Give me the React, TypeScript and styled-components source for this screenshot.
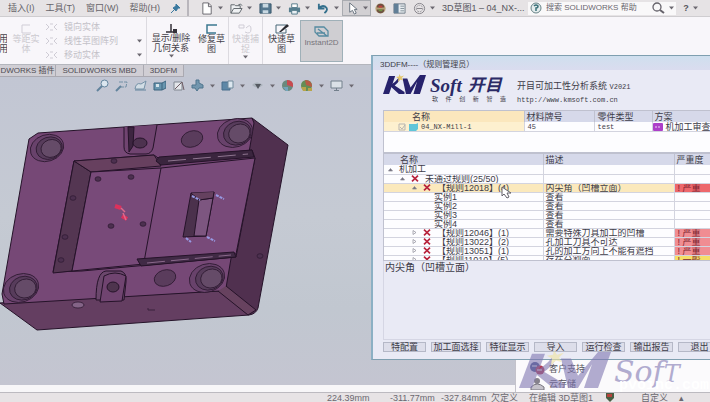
import React from "react";
import styled, { createGlobalStyle, css } from "styled-components";

const Global = createGlobalStyle`
  * { box-sizing: border-box; }
  body { margin: 0; overflow: hidden; }
  body, button, input { font-family: "Liberation Sans", "Noto Sans CJK SC", sans-serif; }
  button { margin: 0; padding: 0; border: 0; background: none; color: inherit; font-size: inherit; line-height: inherit; white-space: nowrap; }
  svg { display: block; flex: none; }
`;

const Page = styled.div`
  position: relative;
  display: flex;
  flex-direction: column;
  min-height: 100vh;
  overflow: hidden;
  font-size: 9px;
  line-height: 12px;
  color: #55545c;
  background: #c3c7d2;
`;

/* ---------- title bar ---------- */
const TitleBar = styled.header`
  display: flex;
  align-items: center;
  height: 17px;
  background: #e6e3e5;
  border-bottom: 1px solid #cfcdd0;
  white-space: nowrap;
`;
const Menus = styled.nav`
  display: flex;
  align-items: center;
  gap: 11px;
  width: 189px;
  height: 100%;
  padding-left: 8px;
  flex: none;
  border-right: 2px solid #b9b6bc;
  color: #66636a;
`;
const ToolButton = styled.button<{ $pressed?: boolean; $wide?: boolean }>`
  display: flex;
  align-items: center;
  justify-content: center;
  gap: 4px;
  width: ${(p) => (p.$wide ? 29 : 19)}px;
  height: 16px;
  flex: none;
  ${(p) =>
    p.$pressed &&
    css`
      background: #d2d0d3;
      border: 1px solid #a9abb0;
    `}
`;
const Tools = styled.div`
  display: flex;
  padding-left: 8px;
  flex: none;
`;
const DocTitle = styled.span`
  margin-left: 4px;
  width: 86px;
  flex: none;
`;
const SearchBox = styled.label`
  display: flex;
  align-items: center;
  gap: 4px;
  width: 148px;
  height: 13px;
  flex: none;
  padding: 0 2px;
  background: #f9f8f9;
`;
const SearchInput = styled.input`
  flex: 1;
  min-width: 0;
  padding: 0;
  border: 0;
  outline: 0;
  background: none;
  font-size: 8px;
  line-height: 12px;
  color: #55545c;
  &::placeholder { color: #69666e; opacity: 1; }
`;

/* ---------- ribbon ---------- */
const Ribbon = styled.section`
  display: flex;
  height: 47px;
  background: #f8f6fa;
`;
const Group = styled.div<{ $width: number }>`
  display: flex;
  width: ${(p) => p.$width}px;
  flex: none;
  border-right: 1px solid #dcdae0;
`;
const RibbonButton = styled.button<{ $width: number; $muted?: boolean; $active?: boolean }>`
  display: flex;
  flex-direction: column;
  align-items: center;
  gap: 1px;
  width: ${(p) => p.$width}px;
  flex: none;
  padding-top: 7px;
  line-height: 9px;
  overflow: hidden;
  color: ${(p) => (p.$muted ? "#cbc9cf" : "#454249")};
  ${(p) =>
    p.$active &&
    css`
      margin: 3px 0 2px;
      padding-top: 5px;
      background: #cfced2;
      border: 1px solid #9fb0b8;
      color: #77757b;
      font-size: 8px;
    `}
`;
const MiniList = styled.div`
  display: flex;
  flex-direction: column;
  flex: 1;
  padding: 3px 4px 0 0;
`;
const MiniRow = styled.button`
  display: flex;
  align-items: center;
  gap: 6px;
  height: 14px;
  color: #c3c1c8;
  & > :last-child { margin-left: auto; }
`;

/* ---------- tabs, view tools and the model ---------- */
const Tabs = styled.nav`
  display: flex;
  height: 13px;
  flex: none;
  border-top: 1px solid #b4b6bd;
`;
const Tab = styled.button<{ $width: number }>`
  width: ${(p) => p.$width}px;
  overflow: hidden;
  background: #d0ced4;
  border-right: 1px solid #aaa9b1;
  border-bottom: 1px solid #aaa9b1;
  font-size: 8px;
  line-height: 11px;
  color: #4e4b53;
`;
const Workspace = styled.main`
  flex: 1;
  background: linear-gradient(#c2c6d3, #c5cad3 45%, #c1c7d0 75%, #c4c5d1);
`;
const ViewTools = styled.div`
  display: flex;
  align-items: center;
  gap: 6px;
  height: 17px;
  padding-left: 96px;
`;
const ModelDrawing = styled.svg`
  width: 300px;
  height: 240px;
  margin-top: 6px;
`;
const Strip = styled.div`
  height: 7px;
  background: #f7f6f8;
`;
const StatusBar = styled.footer`
  display: flex;
  height: 10px;
  flex: none;
  padding-left: 327px;
  border-top: 1px solid #bcbac0;
  background: #e7e3e5;
  line-height: 10px;
  white-space: nowrap;
  color: #6b6870;
`;
const Status = styled.span<{ $width: number }>`
  width: ${(p) => p.$width}px;
  flex: none;
`;

/* ---------- dialog ---------- */
const Dialog = styled.section`
  position: absolute;
  left: 371px;
  top: 55px;
  bottom: 42px;
  width: 400px;
  display: flex;
  flex-direction: column;
  padding: 0 10px 7px 10px;
  background: #e9eaf5;
  border: 1px solid #7f9fb0;
  border-left: 2px solid #8bb0c4;
  color: #3d3c48;
`;
const DialogTitle = styled.h2`
  margin: 0 -10px;
  padding-left: 7px;
  height: 14px;
  background: linear-gradient(#cfdfee, #dadcef);
  font-size: 8px;
  line-height: 17px;
  font-weight: 400;
`;
const Brand = styled.div`
  display: flex;
  height: 40px;
  padding-top: 4px;
`;
const BrandText = styled.div`
  width: 91px;
  padding-left: 4px;
  flex: none;
`;
const BrandName = styled.div`
  display: flex;
  gap: 6px;
  height: 20px;
  font: italic bold 19px/24px "Liberation Serif", "Noto Sans CJK SC", serif;
  color: #2b2a66;
`;
const BrandCjk = styled.span`
  font-size: 17px;
`;
const BrandSlogan = styled.div`
  display: flex;
  justify-content: space-between;
  width: 76px;
  font-size: 6px;
  line-height: 10px;
  padding-left: 2px;
`;
const ProductInfo = styled.div`
  padding-top: 6px;
  font-size: 9px;
  line-height: 12px;
  white-space: nowrap;
`;
const Mono = styled.span`
  font-family: "Liberation Mono", monospace;
  font-size: 7px;
`;
const TableBox = styled.div<{ $height: number }>`
  height: ${(p) => p.$height}px;
  flex: none;
  overflow: hidden;
  background: #fdfdff;
  border: 1px solid #bfc1cf;
`;
const Table = styled.table`
  width: 100%;
  table-layout: fixed;
  border-collapse: collapse;
  white-space: nowrap;
`;
const Th = styled.th<{ $width?: number; $hot?: boolean; $indent: number }>`
  width: ${(p) => (p.$width ? `${p.$width}px` : "auto")};
  height: 11px;
  padding: 0 0 0 ${(p) => p.$indent}px;
  background: ${(p) => (p.$hot ? "#fbe7bd" : "#d6d9ea")};
  border-right: 1px solid #bfc1cf;
  text-align: left;
  font-weight: 400;
  font-size: 9px;
  line-height: 10px;
`;
const Td = styled.td<{ $tone?: string; $indent?: number; $alert?: boolean }>`
  height: 9px;
  padding: 0 0 0 ${(p) => p.$indent ?? 3}px;
  overflow: hidden;
  background: ${(p) => p.$tone ?? "transparent"};
  border-right: 1px solid #d3d4df;
  border-bottom: 1px solid #d3d4df;
  font-size: 9px;
  line-height: 8px;
  color: ${(p) => (p.$alert ? "#7c1f30" : "inherit")};
`;
const Line = styled.span<{ $depth?: number }>`
  display: flex;
  align-items: center;
  gap: ${(p) => (p.$depth === undefined ? 3 : 6)}px;
  height: 8px;
  padding-left: ${(p) => (p.$depth ?? 0) * 13}px;
`;
const Detail = styled.p`
  flex: 1;
  margin: 0 0 2px;
  padding: 0 1px;
  border: 1px solid #d5d6e4;
  border-top: 0;
  font-size: 10px;
  line-height: 13px;
`;
const Actions = styled.div`
  display: flex;
  gap: 5px;
  height: 10px;
  flex: none;
`;
const Action = styled.button<{ $wide?: boolean }>`
  width: ${(p) => (p.$wide ? 50 : 43)}px;
  flex: none;
  background: #dddeea;
  border: 1px solid #b5b8c7;
  font-size: 9px;
  line-height: 8px;
`;

/* ---------- overlays ---------- */
const Popup = styled.div`
  position: absolute;
  left: 515px;
  right: 0;
  bottom: 10px;
  height: 32px;
  display: flex;
  flex-direction: column;
  padding: 1px 14px;
  background: #fbfafc;
  border-left: 1px solid #c4c3cb;
`;
const PopupRow = styled.button`
  display: flex;
  align-items: center;
  gap: 4px;
  height: 15px;
`;
const Watermark = styled.div`
  position: absolute;
  left: 519px;
  bottom: 14px;
  display: flex;
  align-items: flex-end;
  gap: 3px;
  opacity: 0.6;
  pointer-events: none;
  font: italic 30px/28px "DejaVu Serif", serif;
  color: #8077b2;
`;
const SmallCap = styled.span`
  font-size: 24px;
  text-transform: uppercase;
`;
const SiteMark = styled.div`
  position: absolute;
  left: 619px;
  bottom: 7px;
  font: bold 15px/18px "Liberation Mono", monospace;
  color: #fff;
  pointer-events: none;
`;
const Pointer = styled.svg`
  position: absolute;
  left: 501px;
  top: 186px;
`;

const Caret = () => (
  <svg width="5" height="4" viewBox="0 0 5 4"><path d="M0 .5h5L2.500 3.500z" fill="#6c6971" /></svg>
);
const Cross = () => (
  <svg width="8" height="7" viewBox="0 0 8 7"><path d="M1 .7 7 6.300M7 .7 1 6.300" stroke="#b8233c" strokeWidth="1.700" /></svg>
);
const Twist = ({ open }: { open?: boolean }) => (
  <svg width="5" height="5" viewBox="0 0 5 5">
    <path d={open ? "M.5 4 2.500 1.500 4.500 4z" : "M1 .5 4 2.500 1 4.500z"} fill={open ? "#6d6c78" : "none"} stroke="#8b8a96" strokeWidth=".7" />
  </svg>
);

const KmMark = ({ width, height, color, star }: { width: number; height: number; color: string; star: string }) => (
  <svg width={width} height={height} viewBox="0 0 92 40" preserveAspectRatio="none">
    <path d="M13 4h13L13 40H0z" fill={color} />
    <path d="M14 23Q26 18 33 8l4 2Q31 19 25 23L46 36v4H34Z" fill={color} />
    <path d="M42 9h10l7 18L79 2h13L79 40H65l8-25L59 40H49Z" fill={color} />
    <path d="M35 0l3 5 7-2-5 5 3 5-6-2-5 5 1-7-5-3 6-1z" fill={star} />
  </svg>
);

const toolIcons: { name: string; pressed?: boolean; wide: boolean; art: React.ReactNode }[] = [
  { name: "新建", wide: true, art: <path d="M2 1h6l3 3v9H2zM8 1v4h3" fill="#fff" stroke="#66646c" /> },
  { name: "打开", wide: true, art: <path d="M1 12V3h4l1 1h5v3M1 12l3-5h9l-3 5zM9 3q3-2 4 1" fill="#eef0f2" stroke="#5c6268" /> },
  { name: "保存", wide: true, art: <><path d="M1 2h12v10H1z" fill="#54778f" stroke="#38566c" /><path d="M4 2h6v4H4zM4 9h6v3H4z" fill="#c8d8e2" /></> },
  { name: "打印", wide: true, art: <><path d="M4 2h6v4H4z" fill="#fff" stroke="#517887" /><path d="M1 6h12v5H1z" fill="#567e8f" /><path d="M4 9h6v4H4z" fill="#e8eff3" stroke="#517887" /></> },
  { name: "撤销", wide: true, art: <path d="M2 2v5h6M2 7q3-4 7-2 4 3-1 7" fill="none" stroke="#34708d" strokeWidth="2" /> },
  { name: "选择", wide: true, pressed: true, art: <path d="M4 1v10l3-2 2 4 2-1-2-4h3z" fill="#fff" stroke="#66707c" /> },
  { name: "重建", wide: false, art: <><circle cx="7" cy="7" r="5.500" fill="#b6a176" /><path d="M3 6q0-4 4-4t4 4zM3 8h8q0 4-4 4T3 8" fill="#6e4f43" /><path d="M5 4h4v2H5z" fill="#bf4238" /><path d="M5 8h4v2H5z" fill="#719244" /></> },
  { name: "属性", wide: false, art: <><path d="M1 2h12v10H1z" fill="#e6ebef" stroke="#6d7b87" /><path d="M1 2h5v10H1z" fill="#627f97" /><path d="M8 4.500h4M8 7h4M8 9.500h4" stroke="#829099" /></> },
  { name: "选项", wide: true, art: <><circle cx="7" cy="7" r="5.500" fill="none" stroke="#838187" /><circle cx="7" cy="7" r="3.500" fill="none" stroke="#98969c" strokeDasharray="2 1" /><path d="M4 7h6" stroke="#838187" /></> },
];

/* null stands for the drop-down arrow that follows an icon */
const viewIcons: (React.ReactNode | null)[] = [
  <><circle cx="8.500" cy="4.500" r="3.500" fill="#dbe6ef" stroke="#62849d" /><path d="M6 7 1 12" stroke="#62849d" strokeWidth="2" /></>,
  <><path d="M4 3h8l-1 5H6" fill="none" stroke="#7591a6" strokeDasharray="4 1" /><path d="M6 7 1 12" stroke="#62849d" strokeWidth="2" /></>,
  <><path d="M1 10q1-7 6-5l5-3-2 8z" fill="#d2dde5" stroke="#7591a6" /><path d="M1 11h11" stroke="#62849d" /></>,
  <><path d="M1 4h8v7H1zM9 4l4-2v7l-4 2" fill="#6896af" stroke="#3d657f" /><path d="M3 5h3v3H3z" fill="#d5e3ea" /></>,
  <><path d="M2 3h8v8H2z" fill="#e3e6ea" stroke="#818891" /><path d="M3 10 10 3l2 8" fill="none" stroke="#705d65" /></>,
  <><path d="M5 1h3v3l4 2v3H8l-2 3-2-3H1V6h4z" fill="#7296ae" stroke="#4f758d" /></>,
  null,
  <><path d="M1 3h8v8H1z" fill="#5e88a7" stroke="#496f8c" /><path d="M7 2h5v7H7z" fill="#dce7ef" stroke="#708a9b" /></>,
  null,
  <><path d="M1 6q5-5 11 0-6 5-11 0" fill="#a9b1ba" /><path d="M4 5h6L7 10z" fill="#555961" /></>,
  null,
  <><circle cx="6.500" cy="6.500" r="5.500" fill="#69897d" /><path d="M6 1q7 0 6 7L6 6z" fill="#c84b50" /><path d="M2 8h5v4H5z" fill="#73a5bd" /></>,
  <><circle cx="6.500" cy="6.500" r="5.500" fill="#648d54" /><path d="M5 1q7 0 7 7L6 6z" fill="#b75a45" /><path d="M1 8h5v4H3zM8 9h4v3H8z" fill="#b8a44a" /></>,
  null,
  <><path d="M1 2h11v7H1z" fill="#dbe1e7" stroke="#73808c" /><path d="M4 11.500h5M6.500 9v2" stroke="#73808c" /></>,
  null,
];

const Hole = ({ x, y, r = 16 }: { x: number; y: number; r?: number }) => (
  <g transform={`translate(${x} ${y}) rotate(-18)`} stroke="#2c1930" strokeWidth=".8">
    <ellipse rx={r} ry={r * 0.78} fill="#68426b" />
    <ellipse cx={r * 0.12} cy={r * 0.05} rx={r * 0.78} ry={r * 0.65} fill="#573c5b" />
    <ellipse cx={r * 0.22} cy={r * 0.1} rx={r * 0.6} ry={r * 0.52} fill="#654b68" />
  </g>
);
const Boss = ({ x, y }: { x: number; y: number }) => (
  <ellipse cx={x} cy={y} rx="11" ry="8" fill="#5a3c5c" stroke="#2c1930" strokeWidth=".8" transform={`rotate(-18 ${x} ${y})`} />
);

const Model = () => (
  <ModelDrawing viewBox="0 0 300 240" role="img" aria-label="零件模型">
    <g stroke="#251329" strokeWidth="1" strokeLinejoin="round">
      <path d="M252 18 288 45 258 208q-2 6-9 7l-27-26z" fill="#50304f" />
      <path d="m0 203 38-3 182-9 29 24L37 230z" fill="#643e61" />
      <path d="M38 33 252 18l2 5-28 165-6 3L4 204l-2-10L29 39z" fill="#764876" />
      <path d="M218 191l30 24 8-5-30-24" fill="#67425f" />
      <path d="M124 27v20q0 6 6 7h16q5 0 7-6l4-23" fill="#704470" />
      <path d="M128 27h6l-1 19-4 6z" fill="#3d2540" />
      <ellipse cx="140" cy="43" rx="7" ry="5" fill="#4d324f" />
      <path d="M74 61 154 55l7 5 91-10 3 8-19 99-154 14-29 1z" fill="#704370" />
      <path d="M74 61 91 72 72 171l-19 2z" fill="#543652" />
      <path d="M74 61 154 55l7 11-70 6z" fill="#67405f" />
      <path d="M91 72l70-4 94-10-19 96-92 10-72 7z" fill="#784a79" />
      <path d="M161 68 144 162" fill="none" />
      <path d="M159 57 252 50l2 7-93 8-5-4z" fill="#3a253e" />
      <path d="M168 61 248 54" stroke="#8e748f" strokeDasharray="18 7" />
      <path d="M137 159 234 152l2 5-95 9z" fill="#402a45" />
      <path d="M147 163l84-8" stroke="#8a688b" strokeDasharray="18 6" />
      <path d="M191 93 214 92 206 136 183 137z" fill="#4b314c" />
      <path d="M199 100 213 98 206 136 194 136z" fill="#7d5680" />
      <path d="M191 93l8 7 14-2 1-6" fill="#65415f" />
      <path d="M96 200q0-28 10-29h15q6 2 5 11l-2 18z" fill="#6b476c" />
      <path d="M104 176q11-6 22 0l-4 25-22 1z" fill="#704470" />
      <ellipse cx="113" cy="187" rx="6" ry="5" fill="#4e344e" />
      <ellipse cx="78" cy="205" rx="6" ry="3" fill="#846487" strokeWidth=".7" />
    </g>
    <Hole x={47} y={48} r={17} /><Hole x={235} y={33} r={18} /><Boss x={192} y={39} />
    <Hole x={21} y={188} r={18} /><Hole x={207} y={178} r={18} /><Boss x={165} y={178} />
    <g fill="#4c304f" stroke="#2c1930" strokeWidth=".7">
      {[[98, 79], [131, 77], [111, 126], [143, 124], [73, 98], [65, 137], [61, 160], [114, 61], [260, 156]].map(([x, y]) => (
        <ellipse key={`${x}-${y}`} cx={x} cy={y} rx="3" ry="2.300" />
      ))}
    </g>
    <path d="M148 208v2h7" fill="none" stroke="#39213d" />
    <path d="m115 106 6 2m1 8 5 3" stroke="#dc315c" strokeWidth="4" />
    <path d="m121 108 4 4m-2 1 3 7" stroke="#dc6a8c" strokeWidth="1.500" />
    <path d="m192 96 8 4m16-5 8 4m-38 39 5 4m16-5 8 4" stroke="#9799e2" strokeWidth="2" strokeDasharray="3 1" />
  </ModelDrawing>
);

const rules = [
  ["【规则12046】(1)", "需要特殊刀具加工的凹槽", "严重"],
  ["【规则13022】(2)", "孔加工刀具不可达", "严重"],
  ["【规则13051】(1)", "孔的加工方向上不能有遮挡", "严重"],
  ["【规则11010】(5)", "存在分割面", "一般"],
];

export default function App() {
  return (
    <Page>
      <Global />
      <TitleBar>
        <Menus>
          {["插入(I)", "工具(T)", "窗口(W)", "帮助(H)"].map((m) => <button key={m}>{m}</button>)}
          <svg width="9" height="9" viewBox="0 0 9 9"><path d="M5 0 9 4 7 4 5 7 2 4 5 2zM3 6 0 9" fill="#3b7aa0" stroke="#3b7aa0" /></svg>
        </Menus>
        <Tools>
          {toolIcons.map((t) => (
            <ToolButton key={t.name} aria-label={t.name} $wide={t.wide} $pressed={t.pressed}>
              <svg width="13" height="13" viewBox="0 0 14 14">{t.art}</svg>
              {t.wide && <Caret />}
            </ToolButton>
          ))}
        </Tools>
        <DocTitle>3D草图1 – 04_NX-...</DocTitle>
        <SearchBox>
          <svg width="12" height="12" viewBox="0 0 12 12"><circle cx="6" cy="6" r="5" fill="#e4eced" stroke="#678286" /><path d="M4 4q2-2 4 0 0 2-2 2v3" fill="none" stroke="#3a7078" strokeWidth="1.500" /></svg>
          <SearchInput aria-label="搜索" placeholder="搜索 SOLIDWORKS 帮助" />
          <svg width="14" height="12" viewBox="0 0 14 12"><circle cx="6" cy="5" r="4" fill="none" stroke="#66636b" strokeWidth="1.300" /><path d="m9 8 4 3" stroke="#66636b" strokeWidth="2" /></svg>
          <Caret />
        </SearchBox>
        <ToolButton $wide aria-label="帮助"><b>?</b><Caret /></ToolButton>
      </TitleBar>

      <Ribbon>
        <Group $width={147}>
          <RibbonButton $width={7}><svg width="6" height="10" /><span>用</span><span>用</span></RibbonButton>
          <RibbonButton $width={38} $muted>
            <svg width="14" height="10" viewBox="0 0 14 10"><path d="M11 1H3v8h9" fill="none" stroke="#d0cdd6" /></svg>
            <span>等距实</span><span>体</span>
          </RibbonButton>
          <MiniList>
            {["镜向实体", "线性草图阵列", "移动实体"].map((t, i) => (
              <MiniRow key={t}>
                <svg width="13" height="9" viewBox="0 0 13 9"><path d="M1 1l3 3-3 3M12 1 9 4l3 3M5 1h3M5 7h3" fill="none" stroke="#cfccd5" /></svg>
                <span>{t}</span>
                {i ? <Caret /> : <i />}
              </MiniRow>
            ))}
          </MiniList>
        </Group>
        <Group $width={82}>
          <RibbonButton $width={48}>
            <svg width="15" height="9" viewBox="0 0 15 9"><path d="M7 0v8M2 8h9" stroke="#343139" strokeWidth="1.500" /><path d="M9 5h4v4H9z" fill="#343139" /></svg>
            <span>显示/删除</span><span>几何关系</span><Caret />
          </RibbonButton>
          <RibbonButton $width={33}>
            <svg width="15" height="10" viewBox="0 0 15 10"><path d="M13 1H3v8h9" fill="none" stroke="#3b7890" strokeWidth="1.500" /></svg>
            <span>修复草</span><span>图</span>
          </RibbonButton>
        </Group>
        <Group $width={34}>
          <RibbonButton $width={33} $muted>
            <svg width="15" height="10" viewBox="0 0 15 10"><path d="M1 1h5v3H1zM8 4q5-5 5 1t-6 3" fill="none" stroke="#d0cdd6" /></svg>
            <span>快速捕</span><span>捉</span><Caret />
          </RibbonButton>
        </Group>
        <RibbonButton $width={37}>
          <svg width="15" height="10" viewBox="0 0 15 10"><path d="M12 1H2v8h10V5" fill="none" stroke="#496979" /><path d="M5 8 13 0l2 2-8 6z" fill="#28292f" /></svg>
          <span>快速草</span><span>图</span>
        </RibbonButton>
        <RibbonButton $width={43} $active>
          <svg width="15" height="11" viewBox="0 0 15 11"><path d="M1 1h9l4 4v5H5L1 6zM4 3l9 7M3 7h8" fill="none" stroke="#568ba1" strokeWidth="1.300" /></svg>
          <span>Instant2D</span>
        </RibbonButton>
      </Ribbon>

      <Tabs>
        <Tab $width={56}>DWORKS 插件</Tab>
        <Tab $width={88}>SOLIDWORKS MBD</Tab>
        <Tab $width={40}>3DDFM</Tab>
      </Tabs>

      <Workspace>
        <ViewTools>
          {viewIcons.map((art, i) =>
            art ? <svg key={i} width="13" height="13" viewBox="0 0 13 13">{art}</svg> : <Caret key={i} />
          )}
        </ViewTools>
        <Model />
      </Workspace>
      <Strip />
      <StatusBar>
        <Status $width={63}>224.39mm</Status>
        <Status $width={51}>-311.77mm</Status>
        <Status $width={50}>-327.84mm</Status>
        <Status $width={38}>欠定义</Status>
        <Status $width={76}>在编辑 3D草图1</Status>
        <Status $width={36}><svg width="10" height="9" viewBox="0 0 10 9"><path d="M1 0h8v5L5 9 1 5z" fill="#485e43" /><path d="M2 1h5v3H2z" fill="#b5423b" /></svg></Status>
        <Status $width={38}>自定义</Status>
        <span>▴</span>
      </StatusBar>

      <Popup>
        <PopupRow>
          <svg width="15" height="13" viewBox="0 0 15 13"><circle cx="5" cy="5" r="5" fill="#4a568d" /><circle cx="10" cy="8" r="4.500" fill="#b3364e" /><path d="M2 4h5M7 8h5" stroke="#fff" /></svg>
          客户支持
        </PopupRow>
        <PopupRow>
          <svg width="15" height="12" viewBox="0 0 15 12"><circle cx="7" cy="3" r="3" fill="#85818c" /><path d="M1 9q6-6 13 0v3H1z" fill="#c5c2ca" stroke="#77747e" /></svg>
          云存储
        </PopupRow>
      </Popup>

      <Dialog aria-label="3DDFM">
        <DialogTitle>3DDFM----（规则管理员）</DialogTitle>
        <Brand>
          <KmMark width={43} height={20} color="#27226c" star="#e4c76c" />
          <BrandText>
            <BrandName><span>Soft</span><BrandCjk>开目</BrandCjk></BrandName>
            <BrandSlogan>{[..."软件创新智造"].map((c) => <span key={c}>{c}</span>)}</BrandSlogan>
          </BrandText>
          <ProductInfo>
            <div>开目可加工性分析系统 <Mono>V2021</Mono></div>
            <Mono>http://www.kmsoft.com.cn</Mono>
          </ProductInfo>
        </Brand>

        <TableBox $height={43}>
          <Table>
            <thead>
              <tr>
                <Th $width={140} $indent={28} $hot>名称</Th><Th $width={70} $indent={2}>材料牌号</Th>
                <Th $width={58} $indent={3}>零件类型</Th><Th $indent={2}>方案</Th>
              </tr>
            </thead>
            <tbody>
              <tr>
                <Td $tone="#fdf0cf" $indent={14}>
                  <Line>
                    <svg width="20" height="8" viewBox="0 0 20 8"><path d="M1 1h6v6H1zM2 4l2 2 3-4" fill="none" stroke="#b8b5b1" /><path d="M11 1h7l2-1v6l-2 2h-7z" fill="#5fc5d9" /></svg>
                    <Mono>04_NX-Mill-1</Mono>
                  </Line>
                </Td>
                <Td><Mono>45</Mono></Td>
                <Td><Mono>test</Mono></Td>
                <Td $indent={0}>
                  <Line>
                    <svg width="10" height="8" viewBox="0 0 10 8"><rect width="10" height="8" rx="1" fill="#ad3fc9" /><path d="M2 4h6" stroke="#eed3f5" strokeDasharray="2 1" /></svg>
                    机加工审查
                  </Line>
                </Td>
              </tr>
            </tbody>
          </Table>
        </TableBox>

        <TableBox $height={108}>
          <Table>
            <thead>
              <tr><Th $width={159} $indent={16}>名称</Th><Th $width={131} $indent={2}>描述</Th><Th $indent={2}>严重度</Th></tr>
            </thead>
            <tbody>
              <tr><Td $indent={4}><Line $depth={0}><Twist open />机加工</Line></Td><Td /><Td /></tr>
              <tr><Td $indent={3}><Line $depth={1}><Twist open /><Cross />未通过规则(25/50)</Line></Td><Td /><Td /></tr>
              <tr><Td $indent={2} $tone="#fbe9bc"><Line $depth={2}><Twist open /><Cross />【规则12018】(4)</Line></Td><Td $indent={2} $tone="#fbe9bc">内尖角（凹槽立面）</Td><Td $tone="#ed686c" $alert>! 严重</Td></tr>
              {[1, 2, 3, 4].map((n) => (
                <tr key={n}><Td $indent={50}>实例{n}</Td><Td $indent={2}>查看</Td><Td /></tr>
              ))}
              {rules.map(([name, text, level]) => (
                <tr key={name}>
                  <Td $indent={2}><Line $depth={2}><Twist /><Cross />{name}</Line></Td>
                  <Td $indent={2}>{text}</Td>
                  <Td $tone={level === "严重" ? "#f08d92" : "#f5df66"} $alert>! {level}</Td>
                </tr>
              ))}
            </tbody>
          </Table>
        </TableBox>
        <Detail>内尖角（凹槽立面）</Detail>
        <Actions>
          <Action>特配置</Action><Action $wide>加工面选择</Action><Action>特征显示</Action><Action>导入</Action>
          <Action>运行检查</Action><Action>输出报告</Action><Action>退出</Action>
        </Actions>
      </Dialog>

      <Pointer width="11" height="13" viewBox="0 0 11 13"><path d="M1 1v9l2-2 3 4 2-1-2-4h4z" fill="#fff" stroke="#62616a" /></Pointer>
      <Watermark>
        <KmMark width={92} height={38} color="#8077b2" star="#f0e4a0" />
        <span>Sof<SmallCap>t</SmallCap></span>
      </Watermark>
      <SiteMark>pvoinc.com</SiteMark>
    </Page>
  );
}
